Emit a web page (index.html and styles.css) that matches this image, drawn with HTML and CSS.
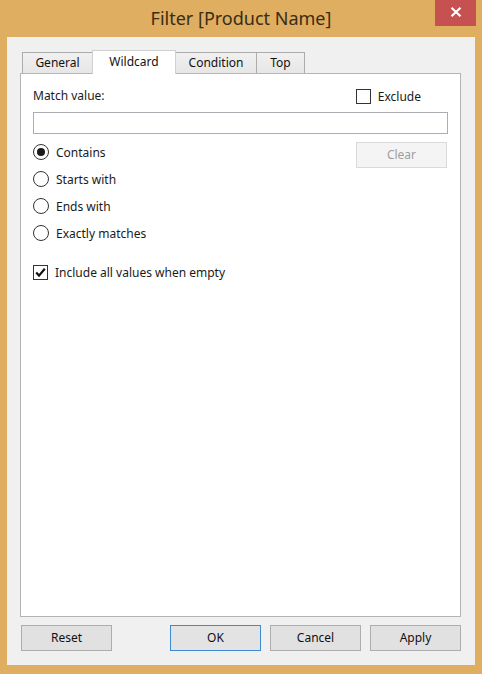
FILE: index.html
```html
<!DOCTYPE html>
<html>
<head>
<meta charset="utf-8">
<link rel="stylesheet" href="styles.css">
</head>
<body>
<div class="window">
  <div class="titlebar">
    <div class="title">Filter [Product Name]</div>
    <div class="close">
      <svg width="12" height="10" viewBox="0 0 12 10"><path d="M1.5 0.8 L10.5 9.2 M10.5 0.8 L1.5 9.2" stroke="#fff" stroke-width="2.2" fill="none"/></svg>
    </div>
  </div>
  <div class="client">
    <div class="tabs">
      <div class="tab t-general">General</div>
      <div class="tab t-wild active">Wildcard</div>
      <div class="tab t-cond">Condition</div>
      <div class="tab t-top">Top</div>
    </div>
    <div class="panel">
      <div class="row-head">
        <span class="label">Match value:</span>
        <label class="check exclude"><span class="box"></span><span>Exclude</span></label>
      </div>
      <div class="input"></div>
      <div class="row-options">
        <div class="radios">
          <div class="radio on"><span class="circle"></span><span>Contains</span></div>
          <div class="radio"><span class="circle"></span><span>Starts with</span></div>
          <div class="radio"><span class="circle"></span><span>Ends with</span></div>
          <div class="radio"><span class="circle"></span><span>Exactly matches</span></div>
        </div>
        <div class="btn disabled">Clear</div>
      </div>
      <div class="check include">
        <span class="box checked"><svg width="13" height="13" viewBox="0 0 13 13"><path d="M2.2 6.6 L5 9.6 L10.8 2.8" stroke="#111" stroke-width="2.2" fill="none"/></svg></span>
        <span>Include all values when empty</span>
      </div>
    </div>
    <div class="buttons">
      <div class="btn">Reset</div>
      <div class="group">
        <div class="btn default">OK</div>
        <div class="btn">Cancel</div>
        <div class="btn">Apply</div>
      </div>
    </div>
  </div>
</div>
</body>
</html>
```

FILE: styles.css
```css
html, body {
  margin: 0;
  padding: 0;
}
body {
  width: 482px;
  height: 674px;
  background: #dfae60;
  font-family: "Noto Sans", "Open Sans", sans-serif;
  font-size: 12px;
  color: #1a1a1a;
  overflow: hidden;
}
.window {
  width: 482px;
  height: 674px;
  display: flex;
  flex-direction: column;
  background: #dfae60;
}
.titlebar {
  height: 37px;
  position: relative;
  display: flex;
  justify-content: center;
}
.title {
  font-family: "Noto Sans", sans-serif;
  font-size: 18px;
  color: #3a2d16;
  margin-top: 5px;
  line-height: 26px;
}
.close {
  position: absolute;
  top: 0;
  left: 435px;
  width: 41px;
  height: 26px;
  background: #c75050;
  display: flex;
  align-items: center;
  justify-content: center;
}
.close svg {
  margin-top: -2px;
}
.client {
  margin: 0 7px 9px 7px;
  flex: 1;
  background: #f0f0f0;
  padding: 13px 14px 14px 13px;
  display: flex;
  flex-direction: column;
}
.tabs {
  display: flex;
  align-items: flex-end;
  height: 23px;
  padding-left: 2px;
}
.tab {
  box-sizing: border-box;
  height: 21px;
  border: 1px solid #acacac;
  border-bottom: none;
  background: linear-gradient(#f0f0f0, #e6e6e6);
  text-align: center;
  line-height: 20px;
  color: #111;
}
.tab + .tab {
  margin-left: -1px;
}
.t-general { width: 71px; }
.t-wild { width: 84px; }
.t-cond { width: 82px; }
.t-top { width: 49px; }
.tab.active {
  height: 24px;
  background: #fff;
  border-color: #d0d0d0;
  margin-bottom: -1px;
  position: relative;
  z-index: 1;
  line-height: 21px;
}
.panel {
  flex: 1;
  background: #fff;
  border: 1px solid #b4b4b4;
  padding: 14px 12px 0 12px;
  display: flex;
  flex-direction: column;
}
.row-head {
  display: flex;
  justify-content: space-between;
  align-items: center;
  height: 16px;
  padding-right: 27px;
}
.label {
  line-height: 16px;
}
.check {
  display: flex;
  align-items: center;
}
.box {
  box-sizing: border-box;
  width: 15px;
  height: 15px;
  border: 1px solid #333;
  background: #fff;
  display: inline-flex;
  align-items: center;
  justify-content: center;
}
.exclude .box {
  margin-right: 7px;
}
.input {
  margin-top: 8px;
  height: 22px;
  box-sizing: border-box;
  border: 1px solid #abadb3;
  background: #fff;
}
.row-options {
  margin-top: 8px;
  display: flex;
  justify-content: space-between;
  align-items: flex-start;
}
.radios {
  display: flex;
  flex-direction: column;
  gap: 7px;
}
.radio {
  display: flex;
  align-items: center;
  height: 20px;
}
.circle {
  box-sizing: border-box;
  width: 16px;
  height: 16px;
  border: 1px solid #333;
  border-radius: 50%;
  margin-right: 7px;
  display: flex;
  align-items: center;
  justify-content: center;
}
.radio.on .circle::after {
  content: "";
  width: 8px;
  height: 8px;
  border-radius: 50%;
  background: #1a1a1a;
}
.include {
  margin-top: 19px;
  height: 20px;
}
.include .box {
  margin-right: 7px;
}
.btn {
  box-sizing: border-box;
  width: 91px;
  height: 26px;
  border: 1px solid #adadad;
  background: #e1e1e1;
  text-align: center;
  line-height: 24px;
  color: #111;
}
.btn.disabled {
  background: #f4f4f4;
  border-color: #dadada;
  color: #9e9e9e;
  margin-right: 1px;
}
.btn.default {
  border-color: #3c8ad0;
  background: #e3e3e3;
}
.buttons {
  margin-top: 8px;
  display: flex;
  justify-content: space-between;
  padding-left: 1px;
}
.group {
  display: flex;
  gap: 9px;
}
```
